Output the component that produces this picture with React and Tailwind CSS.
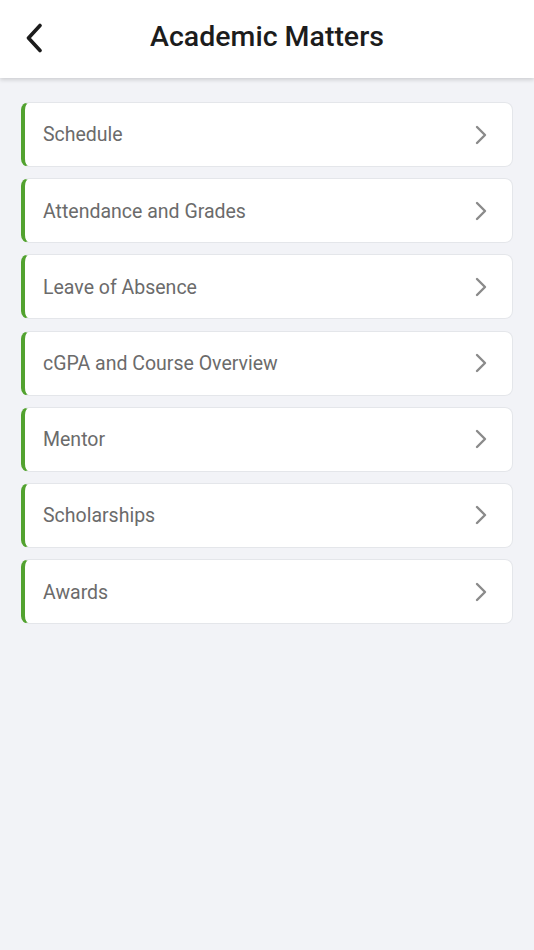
import React from 'react';

const items = [
  'Schedule',
  'Attendance and Grades',
  'Leave of Absence',
  'cGPA and Course Overview',
  'Mentor',
  'Scholarships',
  'Awards',
];

const App = () => {
  return (
    <div className="min-h-[950px] bg-[#f2f3f7] font-['Roboto',sans-serif]">
      {/* Header */}
      <div className="relative flex h-[78px] items-center justify-center bg-white pb-[3px] shadow-[0_2px_4px_rgba(0,0,0,0.15)]">
        <button className="absolute left-[20px] top-[20px] flex h-[36px] w-[28px] items-center justify-center">
          <svg width="20" height="30" viewBox="0 0 20 30" fill="none">
            <path d="M16 2.5 L4.5 15 L16 27.5" stroke="#1c1c1c" strokeWidth="3.6" strokeLinecap="round" strokeLinejoin="round" />
          </svg>
        </button>
        <h1 className="text-[28.5px] font-medium text-[#1c1c1c]">Academic Matters</h1>
      </div>

      {/* List */}
      <div className="flex flex-col gap-[11.2px] px-[21px] pt-[24px]">
        {items.map((item) => (
          <div
            key={item}
            className="flex h-[65px] items-center justify-between rounded-[8px] border border-l-4 border-[#e4e6ea] border-l-[#52a22f] bg-white pl-[18px] pr-[24px]"
          >
            <p className="pt-[1px] text-[19.5px] text-[#6b6b6b]">{item}</p>
            <svg width="14" height="20" viewBox="0 0 14 20" fill="none">
              <path d="M3 2 L11 10 L3 18" stroke="#8a8a8a" strokeWidth="2.4" strokeLinecap="round" strokeLinejoin="round" />
            </svg>
          </div>
        ))}
      </div>
    </div>
  );
};

export default App;
